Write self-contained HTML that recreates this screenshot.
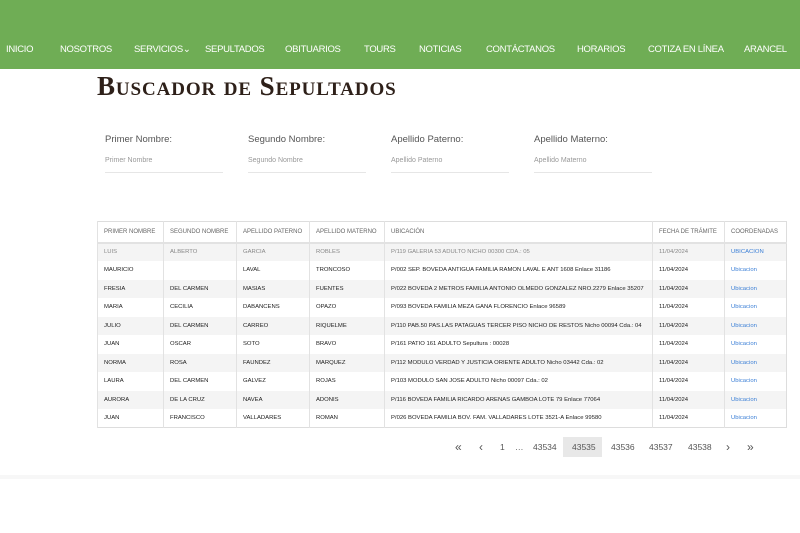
<!DOCTYPE html>
<html><head><meta charset="utf-8"><style>
*{margin:0;padding:0;box-sizing:border-box}
body{width:800px;height:533px;background:#fff;font-family:"Liberation Sans",sans-serif;position:relative;overflow:hidden}
.nav{position:absolute;left:0;top:0;width:800px;height:69px;background:#6fad55}
.nav span{position:absolute;top:44px;color:#fff;font-size:9.5px;letter-spacing:-0.3px}
h1{position:absolute;left:97px;top:71px;font-family:"Liberation Serif",serif;font-variant:small-caps;font-size:27px;color:#2e2019;letter-spacing:0.9px;font-weight:bold}
.f{position:absolute;top:134px;width:118px}
.f .l{font-size:9.5px;color:#555}
.f .p{font-size:7px;color:#999;margin-top:12px;padding-bottom:8px;border-bottom:1px solid #e6e6e6}
table{position:absolute;left:97px;top:221px;width:689px;border-collapse:collapse;table-layout:fixed;border:1px solid #ddd}
td{font-size:5.9px;color:#222;height:18.5px;padding:0 6px;border-left:1px solid #e2e2e2;white-space:nowrap;overflow:hidden}
tr.h td{height:21px;color:#666;font-size:6px;border-bottom:2px solid #e2e2e2}
tr.g td{background:#f4f4f4}
tr.first td{color:#888}
a{color:#3b7fd6}
.pg{position:absolute;top:442px;font-size:8.5px;color:#555}
.ar{top:440px;font-size:12px}
.cur{position:absolute;left:563px;top:437px;width:39px;height:20px;background:#e8e8e8}
.line{position:absolute;left:0;top:475px;width:800px;height:4px;background:#f7f7f7}
</style></head><body>
<div class="nav">
<span style="left:6px">INICIO</span><span style="left:60px">NOSOTROS</span><span style="left:134px">SERVICIOS⌄</span><span style="left:205px">SEPULTADOS</span><span style="left:285px">OBITUARIOS</span><span style="left:364px">TOURS</span><span style="left:419px">NOTICIAS</span><span style="left:486px">CONTÁCTANOS</span><span style="left:577px">HORARIOS</span><span style="left:648px">COTIZA EN LÍNEA</span><span style="left:744px">ARANCEL</span>
</div>
<h1>Buscador de Sepultados</h1>
<div class="f" style="left:105px"><div class="l">Primer Nombre:</div><div class="p">Primer Nombre</div></div>
<div class="f" style="left:248px"><div class="l">Segundo Nombre:</div><div class="p">Segundo Nombre</div></div>
<div class="f" style="left:391px"><div class="l">Apellido Paterno:</div><div class="p">Apellido Paterno</div></div>
<div class="f" style="left:534px"><div class="l">Apellido Materno:</div><div class="p">Apellido Materno</div></div>
<table>
<colgroup><col style="width:66px"><col style="width:73px"><col style="width:73px"><col style="width:75px"><col style="width:268px"><col style="width:72px"><col style="width:62px"></colgroup>
<tr class="h"><td>PRIMER NOMBRE</td><td>SEGUNDO NOMBRE</td><td>APELLIDO PATERNO</td><td>APELLIDO MATERNO</td><td>UBICACIÓN</td><td>FECHA DE TRÁMITE</td><td>COORDENADAS</td></tr>
<tr class="g first"><td>LUIS</td><td>ALBERTO</td><td>GARCIA</td><td>ROBLES</td><td>P/119 GALERIA 53 ADULTO NICHO 00300 CDA.: 05</td><td>11/04/2024</td><td><a>UBICACION</a></td></tr>
<tr><td>MAURICIO</td><td></td><td>LAVAL</td><td>TRONCOSO</td><td>P/002 SEP. BOVEDA ANTIGUA FAMILIA RAMON LAVAL E ANT 1608 Enlace 31186</td><td>11/04/2024</td><td><a>Ubicacion</a></td></tr>
<tr class="g"><td>FRESIA</td><td>DEL CARMEN</td><td>MASIAS</td><td>FUENTES</td><td>P/022 BOVEDA 2 METROS FAMILIA ANTONIO OLMEDO GONZALEZ NRO.2279 Enlace 35207</td><td>11/04/2024</td><td><a>Ubicacion</a></td></tr>
<tr><td>MARIA</td><td>CECILIA</td><td>DABANCENS</td><td>OPAZO</td><td>P/093 BOVEDA FAMILIA MEZA GANA FLORENCIO Enlace 96589</td><td>11/04/2024</td><td><a>Ubicacion</a></td></tr>
<tr class="g"><td>JULIO</td><td>DEL CARMEN</td><td>CARREO</td><td>RIQUELME</td><td>P/110 PAB.50 PAS.LAS PATAGUAS TERCER PISO NICHO DE RESTOS Nicho 00094 Cda.: 04</td><td>11/04/2024</td><td><a>Ubicacion</a></td></tr>
<tr><td>JUAN</td><td>OSCAR</td><td>SOTO</td><td>BRAVO</td><td>P/161 PATIO 161 ADULTO Sepultura : 00028</td><td>11/04/2024</td><td><a>Ubicacion</a></td></tr>
<tr class="g"><td>NORMA</td><td>ROSA</td><td>FAUNDEZ</td><td>MARQUEZ</td><td>P/112 MODULO VERDAD Y JUSTICIA ORIENTE ADULTO Nicho 03442 Cda.: 02</td><td>11/04/2024</td><td><a>Ubicacion</a></td></tr>
<tr><td>LAURA</td><td>DEL CARMEN</td><td>GALVEZ</td><td>ROJAS</td><td>P/103 MODULO SAN JOSE ADULTO Nicho 00097 Cda.: 02</td><td>11/04/2024</td><td><a>Ubicacion</a></td></tr>
<tr class="g"><td>AURORA</td><td>DE LA CRUZ</td><td>NAVEA</td><td>ADONIS</td><td>P/116 BOVEDA FAMILIA RICARDO ARENAS GAMBOA LOTE 79 Enlace 77064</td><td>11/04/2024</td><td><a>Ubicacion</a></td></tr>
<tr><td>JUAN</td><td>FRANCISCO</td><td>VALLADARES</td><td>ROMAN</td><td>P/026 BOVEDA FAMILIA BOV. FAM. VALLADARES LOTE 3521-A Enlace 99580</td><td>11/04/2024</td><td><a>Ubicacion</a></td></tr>
</table>
<div class="cur"></div>
<span class="pg ar" style="left:455px">«</span>
<span class="pg ar" style="left:479px">‹</span>
<span class="pg" style="left:500px">1</span>
<span class="pg" style="left:515px">…</span>
<span class="pg" style="left:533px">43534</span>
<span class="pg" style="left:572px">43535</span>
<span class="pg" style="left:611px">43536</span>
<span class="pg" style="left:649px">43537</span>
<span class="pg" style="left:688px">43538</span>
<span class="pg ar" style="left:726px">›</span>
<span class="pg ar" style="left:747px">»</span>
<div class="line"></div>
</body></html>
